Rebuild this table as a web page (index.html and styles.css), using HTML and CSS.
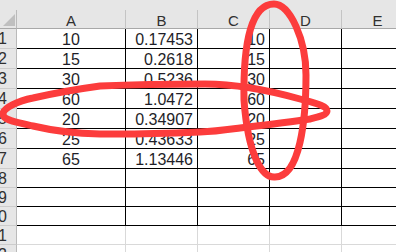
FILE: index.html
```html
<!DOCTYPE html>
<html>
<head>
<meta charset="utf-8">
<title>Sheet</title>
<link rel="stylesheet" href="styles.css">
</head>
<body>
<div class="sheet">
  <div class="topstrip"></div>
  <div class="grid">
    <div class="corner"><svg width="12" height="12" viewBox="0 0 12 12"><polygon points="12,0 12,12 0,12" fill="#bfbfbf"/></svg></div>
    <div class="colh">A</div><div class="colh">B</div><div class="colh">C</div><div class="colh">D</div><div class="colh">E</div>

    <div class="rowh">1</div><div class="cell boxed center">10</div><div class="cell boxed right">0.17453</div><div class="cell boxed right">10</div><div class="cell boxed"></div><div class="cell boxed"></div>
    <div class="rowh">2</div><div class="cell boxed center">15</div><div class="cell boxed right">0.2618</div><div class="cell boxed right">15</div><div class="cell boxed"></div><div class="cell boxed"></div>
    <div class="rowh">3</div><div class="cell boxed center">30</div><div class="cell boxed right">0.5236</div><div class="cell boxed right">30</div><div class="cell boxed"></div><div class="cell boxed"></div>
    <div class="rowh">4</div><div class="cell boxed center">60</div><div class="cell boxed right">1.0472</div><div class="cell boxed right">60</div><div class="cell boxed"></div><div class="cell boxed"></div>
    <div class="rowh">5</div><div class="cell boxed center">20</div><div class="cell boxed right">0.34907</div><div class="cell boxed right">20</div><div class="cell boxed"></div><div class="cell boxed"></div>
    <div class="rowh">6</div><div class="cell boxed center">25</div><div class="cell boxed right">0.43633</div><div class="cell boxed right">25</div><div class="cell boxed"></div><div class="cell boxed"></div>
    <div class="rowh">7</div><div class="cell boxed center">65</div><div class="cell boxed right">1.13446</div><div class="cell boxed right">65</div><div class="cell boxed"></div><div class="cell boxed"></div>
    <div class="rowh">8</div><div class="cell boxed"></div><div class="cell boxed"></div><div class="cell boxed"></div><div class="cell boxed"></div><div class="cell boxed"></div>
    <div class="rowh">9</div><div class="cell boxed"></div><div class="cell boxed"></div><div class="cell boxed"></div><div class="cell boxed"></div><div class="cell boxed"></div>
    <div class="rowh">10</div><div class="cell boxed"></div><div class="cell boxed"></div><div class="cell boxed"></div><div class="cell boxed"></div><div class="cell boxed"></div>
    <div class="rowh">11</div><div class="cell"></div><div class="cell"></div><div class="cell"></div><div class="cell"></div><div class="cell"></div>
    <div class="rowh">12</div><div class="cell"></div><div class="cell"></div><div class="cell"></div><div class="cell"></div><div class="cell"></div>
  </div>
  <svg class="ink" width="396" height="252" viewBox="0 0 396 252">
    <path d="M 3 114 C 3 108, 18 101, 33 98 C 55 93, 78 89, 100 86 C 135 84.5, 170 84, 205 84 C 240 84, 275 92, 300 99 C 318 104, 327 106, 327 111 C 327 115, 318 117, 310 119 C 290 122, 265 125, 240 128 C 225 130, 215 131.5, 200 132 C 165 133.5, 130 134.5, 100 134 C 75 133.5, 50 130, 33 126 C 15 122, 3 120, 3 114 Z" />
    <path d="M 274 4 C 290 4, 306 40, 306 75 C 306 120, 300 177, 275 177 C 262 178, 248 155, 244 100 C 243 40, 252 4, 274 4 Z" />
  </svg>
</div>
</body>
</html>
```

FILE: styles.css
```css
* {
  box-sizing: border-box;
  margin: 0;
  padding: 0;
}

html,
body {
  width: 396px;
  height: 252px;
  overflow: hidden;
  background: #ffffff;
}

body {
  font-family: "Liberation Sans", Arial, sans-serif;
}

.sheet {
  position: relative;
  width: 396px;
  height: 252px;
  overflow: hidden;
}

.topstrip {
  height: 10px;
  background: #e6e6e6;
}

.grid {
  display: grid;
  grid-template-columns: 17px 109px 72px 72px 72px 72px;
  grid-template-rows: 19px repeat(7, 20px) repeat(4, 19px) 20px;
  width: 414px;
}

.corner {
  background: #e6e6e6;
  border-right: 1px solid #bababa;
  border-bottom: 1px solid #a8a8a8;
  display: flex;
  justify-content: flex-end;
  align-items: flex-end;
  padding: 0 1px 2px 0;
}

.colh {
  background: #e6e6e6;
  border-right: 1px solid #c4c4c4;
  border-bottom: 1px solid #a8a8a8;
  font-size: 15px;
  line-height: 15px;
  color: #303030;
  display: flex;
  justify-content: center;
  align-items: flex-end;
}

.rowh {
  background: #e6e6e6;
  border-right: 1px solid #bababa;
  border-bottom: 1px solid #cccccc;
  font-size: 16px;
  line-height: 19px;
  color: #303030;
  display: flex;
  justify-content: flex-end;
  align-items: center;
  padding-right: 9px;
  overflow: hidden;
  white-space: nowrap;
}

.cell {
  border-right: 1px solid #d9d9d9;
  border-bottom: 1px solid #d9d9d9;
  font-size: 16px;
  line-height: 16px;
  color: #1e1e28;
  display: flex;
  align-items: flex-end;
  padding: 0 4px;
  white-space: nowrap;
  overflow: hidden;
}

.cell.boxed {
  border-right-color: #000000;
  border-bottom-color: #000000;
}

.center {
  justify-content: center;
}

.right {
  justify-content: flex-end;
}

.ink {
  position: absolute;
  left: 0;
  top: 0;
  pointer-events: none;
  fill: none;
  stroke: #fc3c3c;
  stroke-width: 7;
  stroke-linejoin: round;
  stroke-linecap: round;
}
```
